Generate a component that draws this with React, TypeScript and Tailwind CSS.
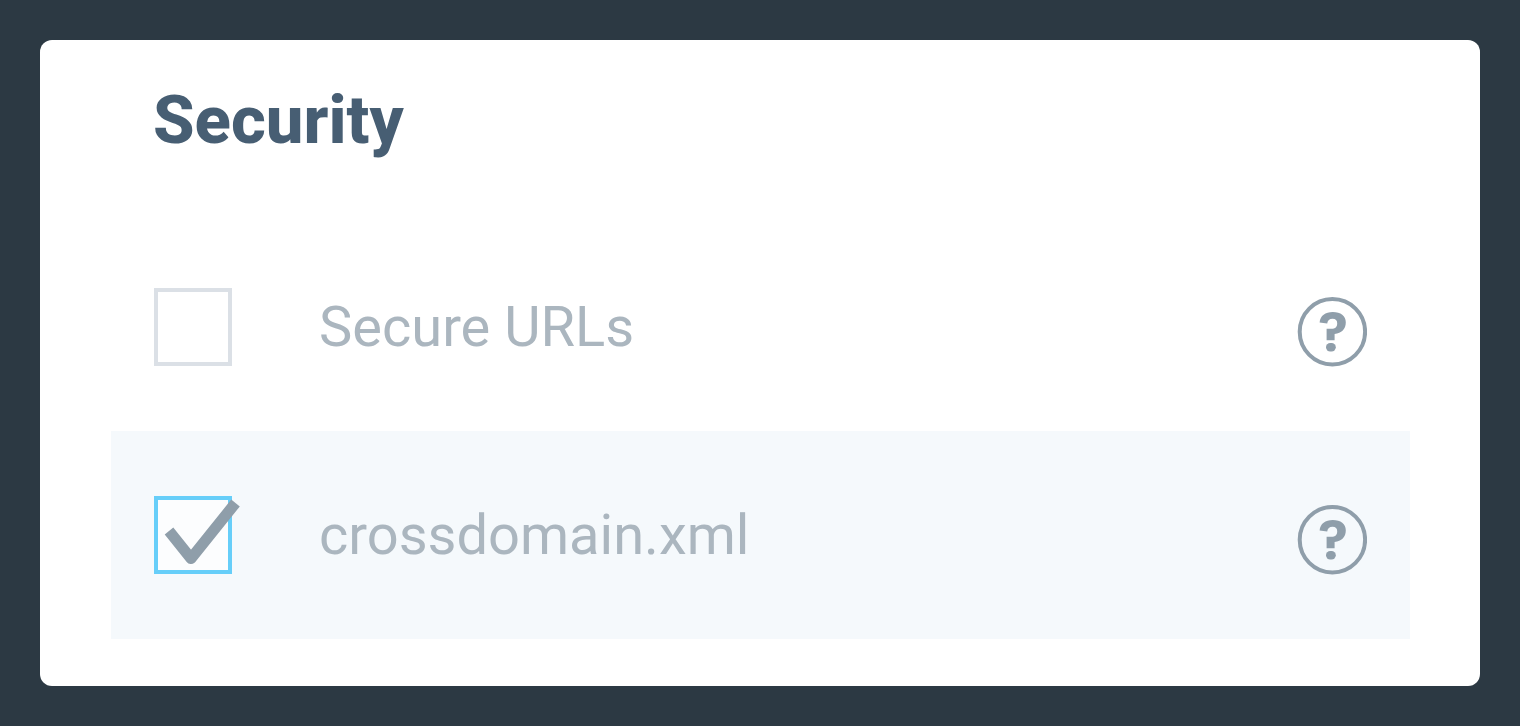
import { useState } from 'react'

type Option = {
  id: string
  label: string
  checked: boolean
}

const initialOptions: Option[] = [
  { id: 'secure-urls', label: 'Secure URLs', checked: false },
  { id: 'crossdomain', label: 'crossdomain.xml', checked: true }
]

const HelpIcon = () => (
  <svg viewBox="0 0 70 70" className="size-[70px]" fill="none" aria-hidden="true">
    <circle cx="35.4" cy="34.8" r="32.7" stroke="#8f9eaa" strokeWidth="4" />
    <path
      d="M22.6 25.5C23.3 18.5 28.3 15 35.8 15C43.7 15 48.8 19 48.8 25.3C48.8 32.2 44.5 36.2 37.6 37V43.2H29.6V31.8H34.4C38.4 31.8 40.2 29.8 40.2 26.2C40.2 23.4 38.6 21.8 35.6 21.8C32.4 21.8 30.6 23.4 30.2 26.6Z"
      fill="#8f9eaa"
    />
    <rect x="29" y="46" width="9.8" height="8.4" rx="4.2" fill="#8f9eaa" />
  </svg>
)

const App = () => {
  const [options, setOptions] = useState(initialOptions)

  const toggle = (id: string) => {
    setOptions(options.map((o) => (o.id === id ? { ...o, checked: !o.checked } : o)))
  }

  return (
    <div className="min-h-screen bg-[#2c3943] p-10">
      <section className="rounded-xl bg-white pt-10 pb-[47px] pl-[71px] pr-[70px]">
        <h1 className="mb-[63px] pl-[42px] font-['Roboto',sans-serif] text-[67px] leading-20 font-extrabold text-[#475e73]">
          Security
        </h1>

        {options.map((option) => (
          <div
            key={option.id}
            className={`flex h-52 items-center px-[43px] ${option.checked ? 'bg-[#f5f9fc]' : ''}`}
          >
            <div className="relative size-[78px]">
              <input
                id={option.id}
                type="checkbox"
                checked={option.checked}
                onChange={() => toggle(option.id)}
                className="block size-full appearance-none border-4 border-[#dbe0e6] bg-white checked:border-[#66cef9] checked:bg-[#fcfdfe]"
              />
              {option.checked && (
                <svg
                  viewBox="0 0 86 78"
                  className="pointer-events-none absolute top-0 left-0 h-[78px] w-[86px]"
                  fill="none"
                  aria-hidden="true"
                >
                  <path
                    d="M15 35L37 62.5L81.5 7"
                    stroke="#8f9eaa"
                    strokeWidth="11"
                    strokeLinejoin="round"
                  />
                </svg>
              )}
            </div>
            <label
              htmlFor={option.id}
              className="ml-[87px] font-['Roboto',sans-serif] text-[56px] leading-16 text-[#abb6bf]"
            >
              {option.label}
            </label>
            <button type="button" aria-label={`Help for ${option.label}`} className="mt-2.5 ml-auto">
              <HelpIcon />
            </button>
          </div>
        ))}
      </section>
    </div>
  )
}

export default App
